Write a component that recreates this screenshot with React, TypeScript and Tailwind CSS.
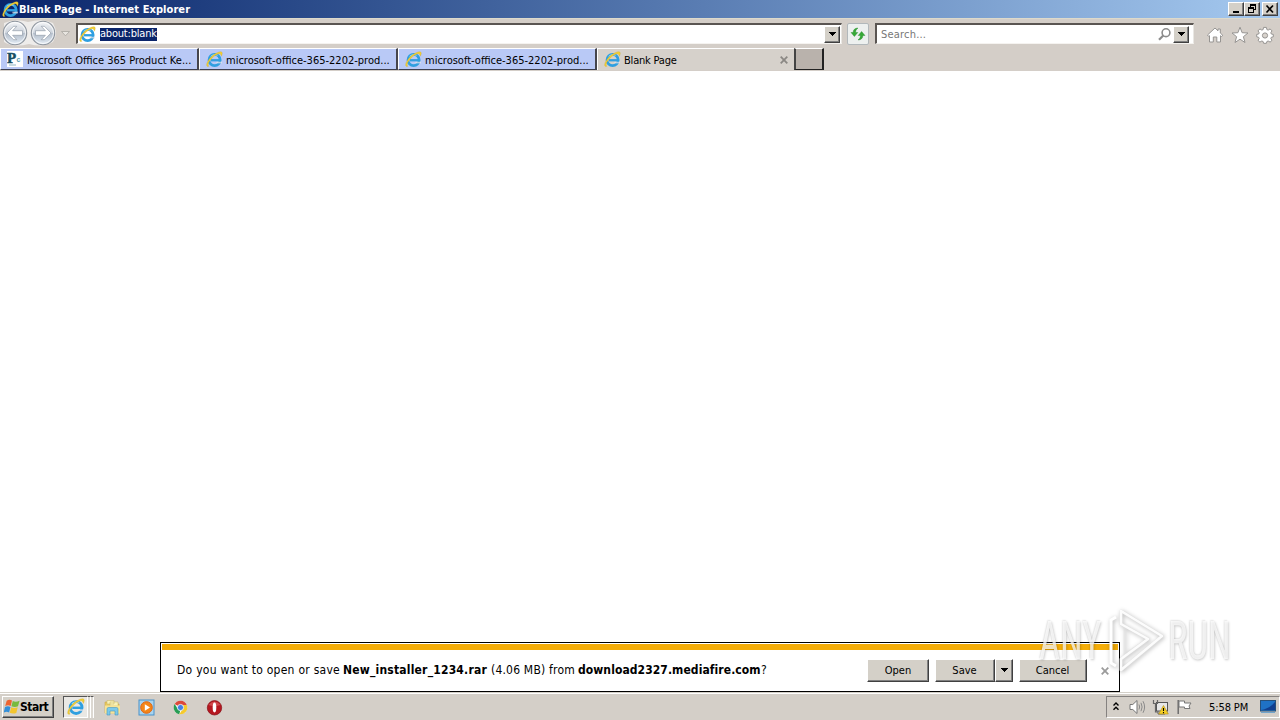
import type { ReactNode } from 'react';

const IELogo = ({ className = '' }: { className?: string }) => (
  <svg viewBox="0 0 17 17" className={className || 'h-[17px] w-[17px] shrink-0'}>
    <circle cx="8.6" cy="9" r="5.6" fill="none" stroke="#2f9fe0" strokeWidth="2.7" />
    <path d="M10.4 10.6H16V12.4H10.4Z" fill="#e9e7e8" opacity=".7" />
    <path d="M5 8.1H14.8V10.4H5Z" fill="#2f9fe0" />
    <path d="M4.6 5.6C6 3.8 9 3 11.6 4.3" fill="none" stroke="#9bdcf8" strokeWidth="1" />
    <path d="M2.9 15.2C-.1 16.2.1 12.9 2.4 9.4C5.1 5.2 10.6 1.1 14.4.8C17 .7 16.4 3.2 15.3 5.2C15.2 3 14 2.2 12 2.9C8.2 4.3 4.2 8.4 2.7 11.6C2 13.3 2 14.6 2.9 15.2Z" fill="#f4d136" stroke="#c9a221" strokeWidth=".3" />
  </svg>
);

const Down = () => (
  <svg viewBox="0 0 7 4" className="h-[4px] w-[7px] shrink-0" shapeRendering="crispEdges">
    <path d="M0 0H7L3.5 4Z" fill="#000" />
  </svg>
);

const Cross = ({ className }: { className: string }) => (
  <svg viewBox="0 0 8 8" className={`h-2 w-2 shrink-0 ${className}`}>
    <path d="M.7.7L7.3 7.3M7.3.7L.7 7.3" stroke="currentColor" strokeWidth="1.8" />
  </svg>
);

const raised = 'border border-t-white border-l-white border-r-[#404040] border-b-[#404040] bg-[#d4d0c8] shadow-[inset_-1px_-1px_0_#808080]';

const CaptionButton = ({ children, className = '' }: { children: ReactNode; className?: string }) => (
  <button className={`flex h-[14px] w-4 items-center justify-center ${raised} ${className}`}>{children}</button>
);

const TitleBar = () => (
  <header className="flex h-[18px] shrink-0 items-center bg-linear-to-r from-[#0a246a] to-[#a6caf0] pr-[2px] pl-[2px] text-white">
    <IELogo />
    <span className="grow pt-px text-[11px] leading-4 font-bold tracking-[0.07px]">Blank Page - Internet Explorer</span>
    <CaptionButton>
      <svg viewBox="0 0 12 10" className="h-[10px] w-3" shapeRendering="crispEdges"><path d="M3 7H9V9H3Z" /></svg>
    </CaptionButton>
    <CaptionButton>
      <svg viewBox="0 0 12 10" className="h-[10px] w-3" shapeRendering="crispEdges">
        <path d="M4 0H10V6H8V5H9V2H5V3H4ZM2 3H8V9H2ZM3 5V8H7V5Z" fillRule="evenodd" />
      </svg>
    </CaptionButton>
    <CaptionButton className="ml-[2px]">
      <svg viewBox="0 0 12 10" className="h-[10px] w-3"><path d="M2.5 1.5L9 8.5M9 1.5L2.5 8.5" stroke="#000" strokeWidth="1.7" /></svg>
    </CaptionButton>
  </header>
);

const NavButtons = () => (
  <svg viewBox="0 0 76 28" className="mb-px h-7 w-[76px] shrink-0">
    <defs>
      <linearGradient id="nav" x1="0" y1="0" x2="0" y2="1">
        <stop offset="0" stopColor="#f4f5f7" />
        <stop offset=".48" stopColor="#ccd3dc" />
        <stop offset=".52" stopColor="#b4becb" />
        <stop offset="1" stopColor="#e4edf6" />
      </linearGradient>
    </defs>
    <path d="M4 4Q15 -1 28 3Q43 -1 53 4Q59 14 53 23Q43 29 29 25Q13 29 4 23Z" fill="#eeecea" />
    {[15, 43].map((x) => (
      <g key={x}>
        <circle cx={x} cy="14" r="11.7" fill="url(#nav)" stroke="#8e959e" strokeWidth="1.1" />
        <circle cx={x} cy="14" r="10.5" fill="none" stroke="#fff" strokeOpacity=".75" />
      </g>
    ))}
    <path d="M7 14L13.5 7.3H16.8L12.6 11.7H22.5V16.3H12.6L16.8 20.7H13.5Z" fill="#fff" stroke="#949eaa" strokeWidth=".7" />
    <path d="M51 14L44.5 7.3H41.2L45.4 11.7H35.5V16.3H45.4L41.2 20.7H44.5Z" fill="#fff" stroke="#949eaa" strokeWidth=".7" />
    <path d="M61.5 12.5H69.5L65.5 16.8Z" fill="#e8e5e0" stroke="#aaa6a1" strokeWidth=".8" />
  </svg>
);

const sunken = 'flex h-[21px] items-center border-t-2 border-l-2 border-r border-b border-t-[#5a5552] border-l-[#5a5552] border-r-[#e9e7e3] border-b-[#f5f3f0] bg-white';

const AddressBar = () => (
  <div className="flex h-[30px] shrink-0 items-center border-t border-[#dddacb] bg-[#d4cec8]">
    <NavButtons />
    <div className={`${sunken} w-[766px] pl-px`}>
      <IELogo />
      <span className="ml-[4px] flex h-[13px] items-center bg-[#0a246a] pt-px text-[11px] tracking-[-0.2px] text-white">about:blank</span>
      <button className={`mr-px ml-auto flex h-[17px] w-4 items-center justify-center ${raised}`}><Down /></button>
    </div>
    <button className="ml-[5px] flex size-[22px] items-center justify-center rounded-[2px] border border-[#b2b8bb] bg-[#edf0ef]">
      <svg viewBox="0 0 16 16" className="size-4">
        <path d="M1 6.5L4.4 10.5L7.8 6.5H5.5Q5.4 3.8 8 2Q3.3 2.2 3.1 6.5Z" fill="#36a936" stroke="#218b29" strokeWidth=".4" />
        <path d="M15 9.5L11.6 5.5L8.2 9.5H10.5Q10.6 12.2 8 14Q12.7 13.8 12.9 9.5Z" fill="#36a936" stroke="#218b29" strokeWidth=".4" />
      </svg>
    </button>
    <div className={`${sunken} ml-[6px] w-[319px] pr-[4px] pl-[4px]`}>
      <span className="grow pt-[2px] text-[11px] leading-4 tracking-[0.2px] text-[#777]">Search...</span>
      <svg viewBox="0 0 15 15" className="mr-px size-[15px]" fill="none" stroke="#8c8c8c">
        <circle cx="9" cy="5.7" r="3.9" strokeWidth="1.6" />
        <path d="M6.3 8.5L2 12.8" strokeWidth="2.2" />
      </svg>
      <button className={`flex h-[17px] w-4 items-center justify-center ${raised}`}><Down /></button>
    </div>
    <div className="ml-[12px] flex items-center gap-[7px] pt-[3px]">
      <svg viewBox="0 0 18 18" className="size-[18px]">
        <path d="M1.5 9L9 2L12 4.8V3H14.3V7L16.8 9.3L15.5 10.5L14.5 9.7V16H10.8V11H7.3V16H3.5V9.7L2.7 10.4Z" fill="#fff" stroke="#969492" strokeWidth="1" />
      </svg>
      <svg viewBox="0 0 18 18" className="size-[18px]">
        <path d="M9 1.2L11.1 6.7L17 7L12.4 10.7L14 16.5L9 13.2L4 16.5L5.6 10.7L1 7L6.9 6.7Z" fill="#fff" stroke="#969492" strokeWidth="1" />
      </svg>
      <svg viewBox="0 0 18 18" className="mb-px size-[18px]">
        <path d="M7.6 1.4H10.4L10.9 3.6L12.2 4.1L14.1 2.9L16 4.9L14.8 6.8L15.3 8L17.3 8.4V10.8L15.3 11.3L14.8 12.5L16 14.3L14.1 16.1L12.2 15L10.9 15.5L10.4 17.3H7.6L7.1 15.5L5.8 15L3.9 16.1L2 14.3L3.2 12.5L2.7 11.3L.7 10.8V8.4L2.7 8L3.2 6.8L2 4.9L3.9 2.9L5.8 4.1L7.1 3.6Z" fill="#fff" stroke="#969492" />
        <circle cx="9" cy="9.5" r="2.6" fill="#d8d3cd" stroke="#969492" />
      </svg>
    </div>
  </div>
);

const Favicon = () => (
  <svg viewBox="0 0 16 16" className="size-4 shrink-0">
    <rect width="16" height="16" fill="#fff" />
    <text x="0" y="12" fontFamily="Liberation Serif, serif" fontWeight="700" fontSize="15" fill="#164d62" stroke="#164d62" strokeWidth=".5">P</text>
    <text x="9.5" y="11" fontFamily="Liberation Sans, sans-serif" fontWeight="700" fontSize="7" fill="#559cae">c</text>
    <path d="M2 14H9" stroke="#90b6c4" />
  </svg>
);

const Tab = ({ icon, label, className = '', active = false }: { icon: ReactNode; label: string; className?: string; active?: boolean }) => (
  <div className={`flex h-[22px] shrink-0 items-center border-t border-l border-white pl-[6px] ${active ? 'w-[197px] bg-[#d6d1cb]' : 'w-[199px] border-r-2 border-b border-r-[#45454c] border-b-[#3d4050] bg-[#b9c9f6]'}`}>
    {icon}
    <span className={`ml-[3px] text-[11px] leading-4 text-black ${active ? 'pt-[2px]' : 'pt-[3px]'} ${className}`}>{label}</span>
    {active && <Cross className="mr-[6px] ml-auto text-[#8b8884]" />}
  </div>
);

const TabStrip = () => (
  <nav className="flex h-[23px] shrink-0 items-start bg-[#d4cec8]">
    <Tab icon={<Favicon />} label="Microsoft Office 365 Product Ke..." className="pl-px" />
    <Tab icon={<IELogo />} label="microsoft-office-365-2202-prod..." />
    <Tab icon={<IELogo />} label="microsoft-office-365-2202-prod..." />
    <Tab icon={<IELogo />} label="Blank Page" className="tracking-[-0.2px]" active />
    <div className="h-[22px] w-[30px] border-t border-r-2 border-b border-l-2 border-t-white border-r-[#222] border-b-[#222] border-l-[#444] bg-[#b9b2ac]" />
  </nav>
);

const DialogButton = ({ children, className }: { children: ReactNode; className: string }) => (
  <button className={`flex h-[23px] items-center justify-center text-[11px] ${raised} ${className}`}>{children}</button>
);

const DownloadBar = () => (
  <section className="flex h-[50px] w-[960px] flex-col border border-black bg-white px-px pt-px">
    <div className="h-[6px] shrink-0 bg-[#f4ad08]" />
    <div className="flex h-[40px] items-center pl-[15px]">
      <p className="flex w-[690px] text-[12px] leading-4 whitespace-pre">
        <span className="w-[166px] tracking-[0.26px]">Do you want to open or save</span>
        <b className="w-[148px] tracking-[0.2px]">New_installer_1234.rar</b>
        <span className="w-[87px] tracking-[0.2px]">(4.06 MB) from</span>
        <b className="w-[183px] tracking-[0.08px]">download2327.mediafire.com</b>
        <span>?</span>
      </p>
      <DialogButton className="w-[62px] pt-[2px]">Open</DialogButton>
      <DialogButton className="ml-[6px] w-[60px] pt-[2px] pr-px">Save</DialogButton>
      <DialogButton className="w-[18px]"><Down /></DialogButton>
      <DialogButton className="ml-[6px] w-[68px] pt-[2px] pr-px">Cancel</DialogButton>
      <Cross className="mt-[2px] ml-[14px] text-[#9b9b9b]" />
    </div>
  </section>
);

const mark = 'inline-block h-[40px] w-[62px] origin-left scale-x-[0.69] font-[Roboto] text-[53px] leading-[40px] whitespace-nowrap text-white/75 [text-shadow:1px_1px_3px_#00000038,-1px_-1px_2px_#00000018]';

const Watermark = () => (
  <div className="pointer-events-none absolute top-[605px] left-[1039px] flex h-[72px] w-[200px] items-center">
    <span className={mark}>ANY</span>
    <svg viewBox="0 0 67 72" className="h-[72px] w-[67px] shrink-0 drop-shadow-[1px_1px_2px_#00000050]" fill="none">
      <path d="M20 6L61 31L20 65V54L47 34L20 19ZM24 20V50L47 34" stroke="#ddd" strokeOpacity=".5" strokeWidth="3" strokeLinejoin="round" />
      <path d="M20 6L61 31L20 65V54L47 34L20 19Z" stroke="#fff" strokeOpacity=".9" strokeWidth="2.5" strokeLinejoin="round" />
      <path d="M15 12L10 15V58L15 61" stroke="#fff" strokeWidth="3" />
    </svg>
    <span className={mark}>RUN</span>
  </div>
);

const Taskbar = () => (
  <footer className="flex h-[28px] shrink-0 items-center border-t border-[#d4d0c8] bg-[#d4cfc8] pt-px pl-[2px] shadow-[inset_0_1px_0_#fff]">
    <button className={`flex h-[22px] w-[52px] items-center pl-px font-bold ${raised}`}>
      <svg viewBox="0 0 16 16" className="size-4 shrink-0">
        <path d="M2.7 1.7Q5.3 0 8 1.5L6.7 6.9Q4 5.5 1.2 7Z" fill="#ed6431" />
        <path d="M8.8 2Q11.8 3.4 15.6 1.7L14 7.3Q10.8 8.7 7.4 7.2Z" fill="#78ba3e" />
        <path d="M1 8Q3.8 6.6 6.5 7.9L5.1 13.5Q2.4 12 -.3 13.6Z" fill="#338fd9" />
        <path d="M7.2 8.3Q10.4 9.7 13.7 8.2L12.3 13.9Q9 15.3 5.8 13.8Z" fill="#f3c52e" />
      </svg>
      <span className="text-[12px] tracking-[-0.5px]">Start</span>
    </button>
    <div className="ml-[9px] flex h-[22px] w-[25px] items-center justify-center border border-t-[#555] border-l-[#555] border-r-white border-b-white bg-[#eae8e4]"><IELogo className="h-[18px] w-[18px]" /></div>
    <div className="h-[22px] w-[3px] border-t border-r border-t-[#555] border-r-white bg-[#dcd8d2]" />
    <div className="h-[22px] w-[3px] border-t border-r border-t-[#555] border-r-white bg-[#dcd8d2]" />
    <div className="ml-[10px] flex items-center gap-[17px]">
      <svg viewBox="0 0 17 17" className="size-[17px]">
        <path d="M1 3H7L8 5H15V14H1Z" fill="#e9c95f" stroke="#c9a747" strokeWidth=".6" />
        <path d="M3 1.5H10V5H3ZM6 3H14V7H6Z" fill="#f9f1b5" stroke="#c5b363" strokeWidth=".5" />
        <path d="M1 6.5H16V14.5H1Z" fill="#f7e396" />
        <path d="M3 16V10Q3 8.5 4.5 8.5H12.5Q14 8.5 14 10V16H11V12H6V16Z" fill="#7cc9e9" stroke="#4498c2" strokeWidth=".6" />
      </svg>
      <svg viewBox="0 0 17 17" className="size-[17px]">
        <rect x="1" y="1" width="15" height="15" fill="#a9d4ef" stroke="#4892c9" />
        <circle cx="8.5" cy="8.5" r="5.8" fill="#f48518" stroke="#df6412" />
        <path d="M6.8 5.2L12 8.5L6.8 11.8Z" fill="#fff" />
      </svg>
      <svg viewBox="0 0 17 17" className="size-[17px]">
        <circle cx="8.5" cy="8.5" r="6.8" fill="#fff" />
        <path d="M8.5 8.5L2.6 5.1A6.8 6.8 0 0 1 14.8 5.9H8.5Z" fill="#dc493a" />
        <path d="M2.6 5.1L6 10L8.5 10.5L7.3 15.2A6.8 6.8 0 0 1 2.6 5.1Z" fill="#279d54" />
        <path d="M8.5 5.9H14.8A6.8 6.8 0 0 1 7.3 15.2L11 9.5Z" fill="#f5ca2d" />
        <circle cx="8.5" cy="8.5" r="3.1" fill="#4381e4" stroke="#fff" strokeWidth=".8" />
      </svg>
      <svg viewBox="0 0 17 17" className="size-[17px]">
        <circle cx="8.5" cy="8.8" r="7.2" fill="#b51820" stroke="#871018" strokeWidth=".7" />
        <path d="M2.3 6Q8.5 -1 14.7 6Q8.5 8 2.3 6" fill="#df6262" opacity=".65" />
        <ellipse cx="8.5" cy="8.5" rx="1.8" ry="4.9" fill="#fff" />
      </svg>
    </div>
    <div className="ml-auto flex h-[22px] w-[174px] items-center border border-t-[#858280] border-l-[#858280] border-r-white border-b-white pl-[6px]">
      <svg viewBox="0 0 6 9" className="mr-[10px] mb-[2px] h-[9px] w-[6px]" fill="none" stroke="#000" strokeWidth="1.4"><path d="M.5 3.6L3 1.1L5.5 3.6M.5 7.8L3 5.3L5.5 7.8" /></svg>
      <svg viewBox="0 0 17 16" className="h-4 w-[17px]" fill="none" stroke="#777">
        <path d="M1 5.5H3.8L8 1.5V14.5L3.8 10.5H1Z" fill="#fff" />
        <path d="M10 5.5Q11.3 8 10 10.5M12 3.8Q14.2 8 12 12.2M14 2.2Q17.2 8 14 13.8" stroke="#8a8a8a" />
      </svg>
      <svg viewBox="0 0 17 16" className="ml-[6px] h-4 w-[17px]">
        <rect x="4.5" y="3.5" width="11" height="8.5" fill="#e7e7e7" stroke="#555" />
        <path d="M6 12V15H13" fill="none" stroke="#666" />
        <path d="M1.5 1V4.5H5.5V1M3.5 4.5V13H6" fill="none" stroke="#666" strokeWidth="1.2" />
        <path d="M11.5 6.5L16.3 15H6.7Z" fill="#f5cf26" stroke="#ae8916" strokeWidth=".6" />
        <path d="M11.5 9V12M11.5 13V14.2" stroke="#000" strokeWidth="1.1" />
      </svg>
      <svg viewBox="0 0 17 16" className="ml-[7px] h-4 w-[17px]">
        <path d="M2.2 1V15" stroke="#666" strokeWidth="1.4" />
        <path d="M3 2H8.5V4H15L13 7L14 9.5H8.5V8H3Z" fill="#fff" stroke="#777" />
      </svg>
      <span className="ml-[16px] w-[51px] pt-[2px] text-[11px] leading-4 tracking-[-0.1px] whitespace-nowrap">5:58 PM</span>
      <svg viewBox="0 0 16 14" className="h-[14px] w-4">
        <rect x=".5" y=".5" width="15" height="10.5" fill="#1f72c5" stroke="#275078" />
        <path d="M1 10Q9 9 15 2V10Z" fill="#113f8f" />
        <path d="M1 12.5H15" stroke="#73a5cb" />
      </svg>
    </div>
  </footer>
);

export default function App() {
  return (
    <div className="relative flex h-[720px] w-[1280px] flex-col overflow-hidden bg-white text-black [font-family:'DejaVu_Sans_Condensed','DejaVu_Sans',sans-serif] [font-stretch:condensed]">
      <TitleBar />
      <AddressBar />
      <TabStrip />
      <main className="flex h-[621px] shrink-0 flex-col items-center justify-end bg-white">
        <DownloadBar />
      </main>
      <Taskbar />
      <Watermark />
    </div>
  );
}
